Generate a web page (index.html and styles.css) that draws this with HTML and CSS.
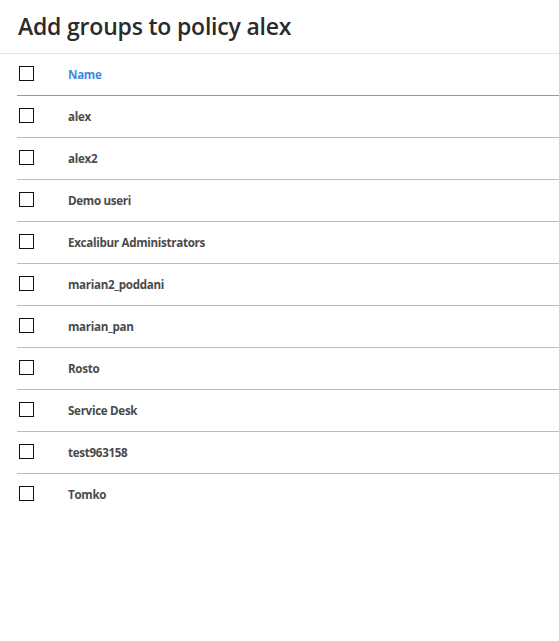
FILE: index.html
```html
<!DOCTYPE html>
<html>
<head>
<meta charset="utf-8">
<link rel="stylesheet" href="styles.css">
</head>
<body>
<div class="page">
  <header class="title-bar">
    <h1 class="title">Add groups to policy alex</h1>
  </header>
  <div class="table">
    <div class="row head">
      <span class="cb"></span>
      <span class="col-name">Name</span>
    </div>
    <div class="row"><span class="cb"></span><span class="cell">alex</span></div>
    <div class="row"><span class="cb"></span><span class="cell">alex2</span></div>
    <div class="row"><span class="cb"></span><span class="cell">Demo useri</span></div>
    <div class="row"><span class="cb"></span><span class="cell">Excalibur Administrators</span></div>
    <div class="row"><span class="cb"></span><span class="cell">marian2_poddani</span></div>
    <div class="row"><span class="cb"></span><span class="cell">marian_pan</span></div>
    <div class="row"><span class="cb"></span><span class="cell">Rosto</span></div>
    <div class="row"><span class="cb"></span><span class="cell">Service Desk</span></div>
    <div class="row"><span class="cb"></span><span class="cell">test963158</span></div>
    <div class="row last"><span class="cb"></span><span class="cell">Tomko</span></div>
  </div>
</div>
</body>
</html>
```
FILE: styles.css
```css
html, body {
  margin: 0;
  padding: 0;
  background: #fff;
}
.page {
  font-family: "Open Sans", "Noto Sans", sans-serif;
  color: #333;
}
.title-bar {
  border-bottom: 1px solid #e3e3e3;
  box-sizing: border-box;
  height: 54px;
  display: flex;
  align-items: center;
  padding-left: 18px;
}
.title {
  margin: 0;
  font-size: 23px;
  font-weight: 600;
  color: #2b2b2b;
  letter-spacing: -0.2px;
  position: relative;
  top: -1px;
}
.table {
  margin-left: 17px;
}
.row {
  display: flex;
  align-items: center;
  height: 42px;
  box-sizing: border-box;
  border-bottom: 1px solid #bcbcbc;
  padding-left: 2px;
}
.row.head {
  border-bottom-color: #999;
}
.row.last {
  border-bottom: none;
  height: 41px;
}
.cb {
  width: 13px;
  height: 13px;
  border: 1px solid #111;
  flex: none;
  position: relative;
  top: -1px;
}
.col-name, .cell {
  margin-left: 34px;
  font-size: 11.6px;
  font-weight: 700;
  letter-spacing: -0.3px;
}
.col-name {
  color: #3f8ae0;
}
.cell {
  color: #4a4a4a;
}
```
